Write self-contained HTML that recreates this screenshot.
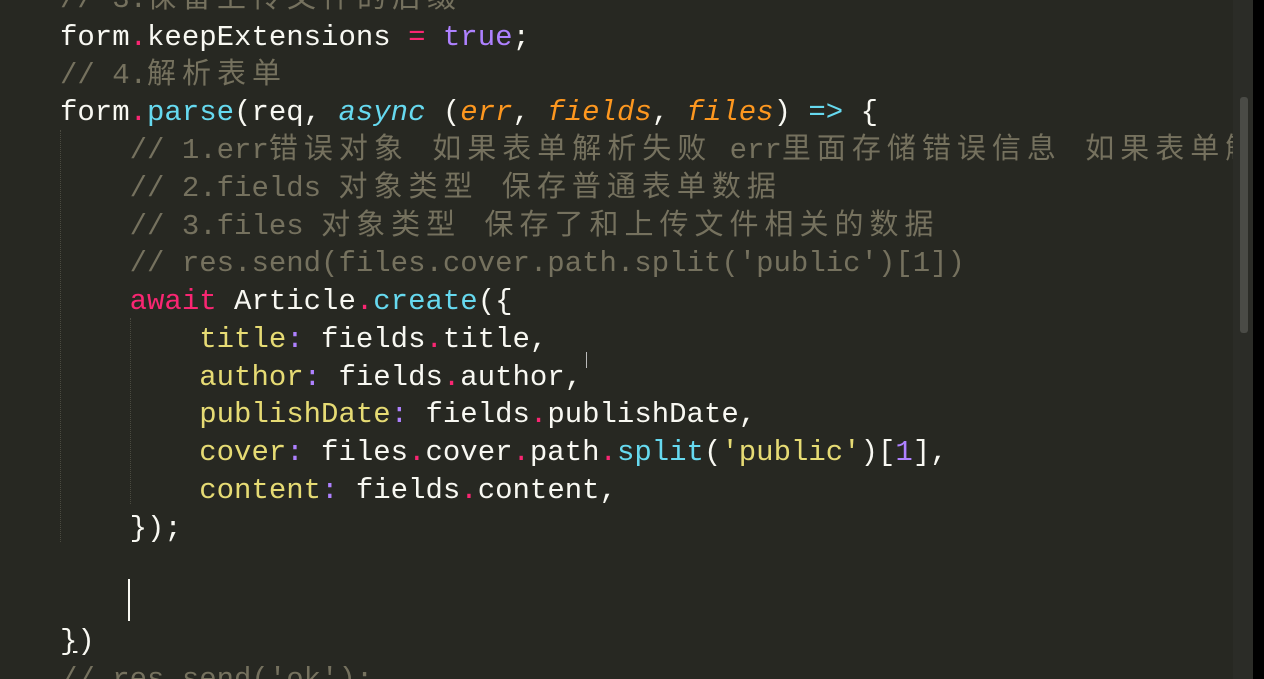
<!DOCTYPE html>
<html><head><meta charset="utf-8"><style>
html,body{margin:0;padding:0;width:1264px;height:679px;overflow:hidden;background:#272822;}
#wrap{position:absolute;left:0;top:0;width:1264px;height:679px;overflow:hidden;}
#code{position:absolute;left:60px;top:-19px;font-family:"Liberation Mono","Noto Sans CJK SC",monospace;font-size:29px;line-height:37.75px;color:#f8f8f2;white-space:pre;}
.c{color:#75715e}
.z{letter-spacing:6px}
.p{color:#f92672}
.k{color:#66d9ef}
.i{color:#66d9ef;font-style:italic}
.o{color:#fd971f;font-style:italic}
.v{color:#ae81ff}
.y{color:#e6db74}
.g{position:absolute;width:0;border-left:1px dotted #4a4a40}
</style></head><body><div id="wrap">
<div class="g" style="left:60px;top:130px;height:412px"></div>
<div class="g" style="left:130px;top:318px;height:186px"></div>
<div id="code"><span class="c">// 3.<span class="z">保留上传文件的后缀</span></span>
form<span class="p">.</span>keepExtensions <span class="p">=</span> <span class="v">true</span>;
<span class="c">// 4.<span class="z">解析表单</span></span>
form<span class="p">.</span><span class="k">parse</span>(req, <span class="i">async</span> (<span class="o">err</span>, <span class="o">fields</span>, <span class="o">files</span>) <span class="k">=&gt;</span> {
    <span class="c">// 1.err<span class="z">错误对象 如果表单解析失败</span> err<span class="z">里面存储错误信息 如果表单解析</span></span>
    <span class="c">// 2.fields <span class="z">对象类型 保存普通表单数据</span></span>
    <span class="c">// 3.files <span class="z">对象类型 保存了和上传文件相关的数据</span></span>
    <span class="c">// res.send(files.cover.path.split('public')[1])</span>
    <span class="p">await</span> Article<span class="p">.</span><span class="k">create</span>({
        <span class="y">title</span><span class="v">:</span> fields<span class="p">.</span>title,
        <span class="y">author</span><span class="v">:</span> fields<span class="p">.</span>author,
        <span class="y">publishDate</span><span class="v">:</span> fields<span class="p">.</span>publishDate,
        <span class="y">cover</span><span class="v">:</span> files<span class="p">.</span>cover<span class="p">.</span>path<span class="p">.</span><span class="k">split</span>(<span class="y">'public'</span>)[<span class="v">1</span>],
        <span class="y">content</span><span class="v">:</span> fields<span class="p">.</span>content,
    });

    
<span style="text-decoration:underline">}</span>)
<span class="c">// res.send('ok');</span></div>
<div style="position:absolute;left:128px;top:579px;width:2px;height:42px;background:#f8f8f2"></div>
<div style="position:absolute;left:586px;top:352px;width:1px;height:16px;background:#bbb"></div>
<div style="position:absolute;left:1233px;top:0;width:20px;height:679px;background:#2b2c27"></div>
<div style="position:absolute;left:1240px;top:97px;width:8px;height:236px;background:#4a4b46;border-radius:3px"></div>
<div style="position:absolute;left:1253px;top:0;width:11px;height:679px;background:#000"></div>
</div></body></html>
